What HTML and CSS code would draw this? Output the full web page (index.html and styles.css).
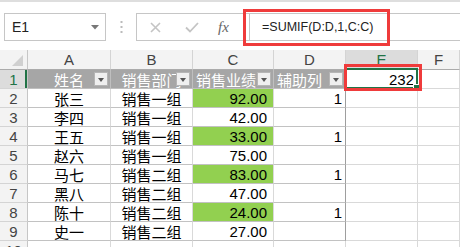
FILE: index.html
```html
<!DOCTYPE html>
<html lang="zh-CN">
<head>
    <meta charset="UTF-8">
    <title>SUMIF 辅助列</title>
    <link rel="stylesheet" href="styles.css">
</head>
<body>

<div class="ribbon-edge"></div>

<div class="toolbar">
    <div class="name-box">
        <span>E1</span>
        <svg class="caret" width="8" height="5" viewBox="0 0 8 5"><path d="M0 0H8L4 4.5Z" fill="#777"/></svg>
    </div>
    <div class="grip">
        <svg width="3" height="12" viewBox="0 0 3 12"><rect x="0.5" y="0" width="2" height="2" fill="#bbb"/><rect x="0.5" y="5" width="2" height="2" fill="#bbb"/><rect x="0.5" y="10" width="2" height="2" fill="#bbb"/></svg>
    </div>
    <div class="formula-bar">
        <div class="fx-tools">
            <svg class="tool-cancel" width="11" height="11" viewBox="0 0 11 11"><path d="M1 1L10 10M10 1L1 10" stroke="#c4c4c4" stroke-width="1.6"/></svg>
            <svg class="tool-enter" width="14" height="11" viewBox="0 0 14 11"><path d="M1 5.5L5 9.5L13 1" stroke="#c4c4c4" stroke-width="1.8" fill="none"/></svg>
            <span class="fx">fx</span>
        </div>
        <div class="formula-input">=SUMIF(D:D,1,C:C)</div>
    </div>
</div>

<div class="sheet" id="sheet"></div>

<div class="mark mark-formula"></div>
<div class="mark mark-cell"></div>

<script>
    const header = ['姓名', '销售部门', '销售业绩', '辅助列'];
    const rows = [
        ['张三', '销售一组', '92.00', '1'],
        ['李四', '销售一组', '42.00', ''],
        ['王五', '销售一组', '33.00', '1'],
        ['赵六', '销售一组', '75.00', ''],
        ['马七', '销售二组', '83.00', '1'],
        ['黑八', '销售二组', '47.00', ''],
        ['陈十', '销售二组', '24.00', '1'],
        ['史一', '销售二组', '27.00', '']
    ];

    const sheet = document.getElementById('sheet');

    function cell(cls, text) {
        const div = document.createElement('div');
        div.className = 'cell ' + cls;
        if (text) div.textContent = text;
        sheet.appendChild(div);
        return div;
    }

    // column letters
    const corner = cell('corner', '');
    corner.innerHTML = '<svg width="12" height="12" viewBox="0 0 12 12"><path d="M11 0V11H0Z" fill="#d0d0d0"/></svg>';
    ['A', 'B', 'C', 'D', 'E', 'F'].forEach(letter => {
        cell('col-head' + (letter === 'E' ? ' active' : ''), letter);
    });

    // row 1: filter header
    cell('row-head active', '1');
    header.forEach((title, i) => {
        const c = cell('th th-' + i, title);
        const btn = document.createElement('span');
        btn.className = 'filter';
        c.appendChild(btn);
    });
    const result = cell('num selected', '232');
    result.innerHTML += '<span class="handle"></span>';
    cell('', '');

    // data rows
    rows.forEach((r, i) => {
        cell('row-head', String(i + 2));
        cell('td center', r[0]);
        cell('td center', r[1]);
        cell('td num amount' + (r[3] ? ' green' : ''), r[2]);
        cell('td num last', r[3]);
        cell('', '');
        cell('', '');
    });

    cell('row-head', '10');
    for (let i = 0; i < 6; i++) cell('', '');
</script>

</body>
</html>
```

FILE: styles.css
```css
body {
    margin: 0;
    width: 460px;
    height: 247px;
    overflow: hidden;
    position: relative;
    background-color: #fff;
    font-family: "Liberation Sans", "Noto Sans CJK SC", sans-serif;
    color: #000;
}

.ribbon-edge {
    height: 2px;
    background-color: #dedede;
}

/* name box + formula bar */
.toolbar {
    height: 48px;
    box-sizing: border-box;
    padding-top: 11px;
    display: flex;
    align-items: flex-start;
}

.name-box {
    margin-left: 4px;
    width: 102px;
    height: 28px;
    box-sizing: border-box;
    border: 1px solid #c6c6c6;
    display: flex;
    align-items: center;
    justify-content: space-between;
    padding: 0 6px 0 7px;
    font-size: 14px;
    color: #222;
}

.grip {
    width: 30px;
    height: 28px;
    display: flex;
    align-items: center;
    justify-content: center;
}

.formula-bar {
    flex: 1;
    height: 28px;
    box-sizing: border-box;
    border: 1px solid #c6c6c6;
    border-right: none;
    display: flex;
}

.fx-tools {
    width: 112px;
    display: flex;
    align-items: center;
    padding-left: 13px;
    box-sizing: border-box;
}

.tool-enter {
    margin-left: 24px;
}

.fx {
    margin-left: 19px;
    font-family: "Liberation Serif", serif;
    font-style: italic;
    font-size: 15px;
    color: #666;
}

.formula-input {
    flex: 1;
    border-left: 1px solid #c6c6c6;
    padding-left: 12px;
    display: flex;
    align-items: center;
    font-size: 12.5px;
    color: #222;
}

/* worksheet grid */
.sheet {
    display: grid;
    grid-template-columns: 28px 83px 82px 81px 72px 72px 1fr;
    grid-template-rows: 20px;
    grid-auto-rows: 19px;
}

.cell {
    box-sizing: border-box;
    border-right: 1px solid #d9d9d9;
    border-bottom: 1px solid #d9d9d9;
    display: flex;
    align-items: center;
    padding: 0 3px;
    font-size: 15px;
    white-space: nowrap;
    overflow: hidden;
    position: relative;
}

.corner {
    background-color: #f3f3f3;
    border-right-color: #c6c6c6;
    border-bottom-color: #ababab;
    align-items: flex-end;
    justify-content: flex-end;
    padding: 0 3px 2px 0;
}

.col-head {
    background-color: #f3f3f3;
    border-right-color: #d4d4d4;
    border-bottom-color: #ababab;
    justify-content: center;
    color: #444;
}

.col-head.active {
    background-color: #dcdcdc;
    color: #217346;
}

.row-head {
    background-color: #f3f3f3;
    border-right-color: #c6c6c6;
    border-bottom-color: #d4d4d4;
    justify-content: center;
    color: #444;
}

.row-head.active {
    background-color: #dcdcdc;
    color: #217346;
    box-shadow: inset -2px 0 0 #217346;
}

/* table header row with filter buttons */
.th {
    background-color: #a6a6a6;
    color: #fff;
    border-color: #bfbfbf;
    justify-content: center;
}

.th-2, .th-3 {
    justify-content: flex-start;
}

.th-3 {
    border-right-color: #9e9e9e;
}

.filter {
    position: absolute;
    right: 2px;
    top: 2px;
    width: 14px;
    height: 14px;
    box-sizing: border-box;
    background-color: #efefef;
    border: 1px solid #b5b5b5;
}

.filter::after {
    content: "";
    position: absolute;
    left: 3px;
    top: 5px;
    border-left: 3.5px solid transparent;
    border-right: 3.5px solid transparent;
    border-top: 4px solid #555;
}

.td {
    border-bottom-color: #c2c2c2;
}

.center {
    justify-content: center;
}

.num {
    justify-content: flex-end;
}

.amount {
    padding-right: 6px;
}

.green {
    background-color: #92d050;
}

.last {
    border-right-color: #9e9e9e;
}

.selected {
    overflow: visible;
}

.selected::before {
    content: "";
    position: absolute;
    left: -2px;
    top: -2px;
    right: -1px;
    bottom: -1px;
    border: 2px solid #217346;
}

.handle {
    position: absolute;
    right: -3px;
    bottom: -3px;
    width: 5px;
    height: 5px;
    background-color: #217346;
    border: 1px solid #fff;
}

/* red annotation boxes */
.mark {
    position: absolute;
    border: 3px solid #ef3b3b;
    box-sizing: border-box;
}

.mark-formula {
    left: 243px;
    top: 9px;
    width: 147px;
    height: 37px;
}

.mark-cell {
    left: 344px;
    top: 64px;
    width: 78px;
    height: 27px;
}
```
